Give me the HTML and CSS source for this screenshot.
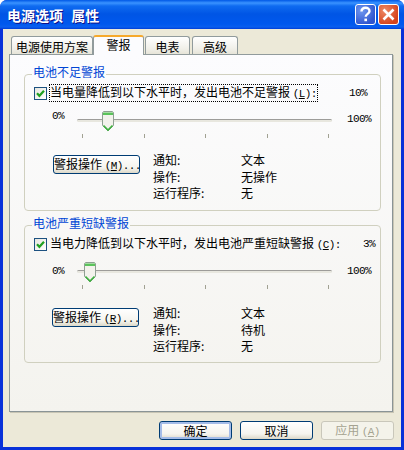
FILE: index.html
```html
<!DOCTYPE html>
<html lang="zh-CN">
<head>
<meta charset="utf-8">
<title>电源选项 属性</title>
<link rel="stylesheet" href="styles.css">
</head>
<body>
<div class="window">
  <header class="titlebar">
    <span class="title">电源选项  属性</span>
    <div class="caption-btns">
      <div class="cap help">
        <svg width="21" height="21" viewBox="0 0 21 21"><path d="M6.5 7.5C6.5 5 8.3 3.8 10.5 3.8S14.5 5 14.5 7.2C14.5 9.8 10.7 10 10.7 12.8" fill="none" stroke="#fff" stroke-width="2.4"/><rect x="9.4" y="14.6" width="2.6" height="2.6" fill="#fff"/></svg>
      </div>
      <div class="cap close">
        <svg width="21" height="21" viewBox="0 0 21 21"><path d="M5.5 5.5L15.5 15.5M15.5 5.5L5.5 15.5" fill="none" stroke="#fff" stroke-width="2.6"/></svg>
      </div>
    </div>
  </header>
  <div class="client">
    <nav class="tabs">
      <div class="tab t1">电源使用方案</div>
      <div class="tab t2 active">警报</div>
      <div class="tab t3">电表</div>
      <div class="tab t4">高级</div>
    </nav>
    <main class="panel">
      <fieldset class="group g1">
        <legend>电池不足警报</legend>
        <div class="check-row">
          <span class="checkbox"><svg width="11" height="11" viewBox="0 0 11 11"><path d="M2 5.2L4.4 7.8L9 2.8" fill="none" stroke="#21a121" stroke-width="2.2"/></svg></span>
          <span class="check-label focus">当电量降低到以下水平时，发出电池不足警报 <span class="lat">(<u>L</u>):</span></span>
          <span class="pct cur">10%</span>
        </div>
        <div class="slider-row">
          <span class="pct lo">0%</span>
          <div class="slider">
            <div class="track"></div>
            <svg class="thumb th1" width="12" height="21" viewBox="0 0 12 21"><path d="M1.5.5H10.5L11.5 1.5V14.5L6 20L.5 14.5V1.5Z" fill="#f3f2ec" stroke="#8f9f92"/><path d="M1 1.5H11V4H1Z" fill="#5bc35b"/><path d="M1.5 14.5L6 19L10.5 14.5" fill="none" stroke="#3fb23f" stroke-width="1.6"/></svg>
            <div class="ticks"><i></i><i></i><i></i><i></i><i></i></div>
          </div>
          <span class="pct hi">100%</span>
        </div>
        <div class="action-row">
          <button class="xp-btn action">警报操作 <span class="lat">(<u>M</u>)...</span></button>
          <dl class="info">
            <dt>通知:</dt><dd>文本</dd>
            <dt>操作:</dt><dd>无操作</dd>
            <dt>运行程序:</dt><dd>无</dd>
          </dl>
        </div>
      </fieldset>
      <fieldset class="group g2">
        <legend>电池严重短缺警报</legend>
        <div class="check-row">
          <span class="checkbox"><svg width="11" height="11" viewBox="0 0 11 11"><path d="M2 5.2L4.4 7.8L9 2.8" fill="none" stroke="#21a121" stroke-width="2.2"/></svg></span>
          <span class="check-label">当电力降低到以下水平时，发出电池严重短缺警报 <span class="lat">(<u>C</u>):</span></span>
          <span class="pct cur">3%</span>
        </div>
        <div class="slider-row">
          <span class="pct lo">0%</span>
          <div class="slider">
            <div class="track"></div>
            <svg class="thumb th2" width="12" height="21" viewBox="0 0 12 21"><path d="M1.5.5H10.5L11.5 1.5V14.5L6 20L.5 14.5V1.5Z" fill="#f3f2ec" stroke="#8f9f92"/><path d="M1 1.5H11V4H1Z" fill="#5bc35b"/><path d="M1.5 14.5L6 19L10.5 14.5" fill="none" stroke="#3fb23f" stroke-width="1.6"/></svg>
            <div class="ticks"><i></i><i></i><i></i><i></i><i></i></div>
          </div>
          <span class="pct hi">100%</span>
        </div>
        <div class="action-row">
          <button class="xp-btn action">警报操作 <span class="lat">(<u>R</u>)...</span></button>
          <dl class="info">
            <dt>通知:</dt><dd>文本</dd>
            <dt>操作:</dt><dd>待机</dd>
            <dt>运行程序:</dt><dd>无</dd>
          </dl>
        </div>
      </fieldset>
    </main>
    <footer class="footer">
      <button class="xp-btn dlg default">确定</button>
      <button class="xp-btn dlg">取消</button>
      <button class="xp-btn dlg disabled">应用 <span class="lat">(<u>A</u>)</span></button>
    </footer>
  </div>
</div>
</body>
</html>
```
FILE: styles.css
```css
* { box-sizing: border-box; }
html, body { margin: 0; padding: 0; }
body { width: 404px; height: 450px; overflow: hidden; background: #fff; }

.window {
  width: 404px; height: 450px;
  display: flex; flex-direction: column;
  font: 12px/16px "Noto Sans CJK SC", sans-serif;
  color: #000;
  background: #0831d9;
  border-radius: 7px 7px 0 0;
  overflow: hidden;
}
.titlebar {
  height: 29px; flex: none;
  display: flex; align-items: center; justify-content: space-between;
  padding: 0 5px 0 7px;
  background: linear-gradient(180deg, #0058e6 0, #3a93ff 3px, #0f6bf0 6px, #0055e5 14px, #0058ee 24px, #0a5fef 27px, #003dd7 29px);
}
.title {
  font-weight: 700; font-size: 14px; line-height: 18px;
  color: #fff; white-space: pre; word-spacing: 1px;
  text-shadow: 1px 1px 0 #0f1089;
}
.caption-btns { display: flex; gap: 2px; }
.cap {
  width: 21px; height: 21px;
  border: 1px solid #fff; border-radius: 3px;
  display: flex;
}
.cap svg { margin: -1px; flex: none; }
.help { background: radial-gradient(circle at 30% 30%, #6f97ef, #2f55cf 75%); }
.close { background: radial-gradient(circle at 30% 30%, #ee8a66, #d5431c 75%); }

.client {
  flex: 1; min-height: 0;
  margin: 0 3px 3px;
  background: #ece9d8;
  padding: 7px 7px 0 6px;
  display: flex; flex-direction: column;
}
.tabs { display: flex; height: 18px; flex: none; align-items: flex-end; padding-left: 2px; position: relative; z-index: 1; }
.tab {
  height: 18px; margin-right: 1px;
  border: 1px solid #919b9c; border-bottom: 0;
  border-radius: 3px 3px 0 0;
  background: linear-gradient(180deg, #fff, #f0efe8 70%, #e6e4d8);
  text-align: center; line-height: 19px;
}
.t1 { width: 82px; margin-right: 0; }
.t2 { width: 51px; }
.t3 { width: 45px; margin-right: 2px; }
.t4 { width: 46px; }
.tab.active {
  height: 20px; margin-bottom: -1px;
  background: #fcfcfe;
  border-top: 2px solid #f6a92c;
  line-height: 15px;
}
.panel {
  height: 358px; flex: none;
  margin-right: 1px;
  border: 1px solid #919b9c;
  border-right-color: #8a9496; border-bottom-color: #8a9496;
  box-shadow: 1px 1px 0 #c8c5b4;
  background: linear-gradient(180deg, #fcfcfe 0, #f4f3ee 100%);
  padding: 9px 12px 0 14px;
}
.group {
  margin: 0; padding: 0 0 0 9px;
  width: 357px;
  border: 1px solid #d0d0bf;
  border-radius: 4px;
  min-inline-size: 0;
}
.g1 { height: 147px; }
.g2 { height: 148px; margin-top: 4px; }
.group legend { color: #0046d5; padding: 0 1px 4px; margin-left: -2px; line-height: 16px; }

.check-row { display: flex; align-items: center; height: 16px; margin-top: 1px; }
.checkbox {
  width: 13px; height: 13px; flex: none;
  border: 1px solid #1c5180;
  background: linear-gradient(135deg, #e6e6df, #fff);
  display: flex; align-items: center; justify-content: center;
  margin-right: 2px;
}
.check-label { white-space: nowrap; padding: 0 1px; }
.focus { outline: 1px dotted #000; outline-offset: -1px; }
.cur { margin-left: auto; margin-right: 13px; }
.g2 .cur { margin-right: 5px; }

.lat, .pct { font: 11px/16px "Liberation Mono", monospace; letter-spacing: -.6px; }

.slider-row { display: flex; height: 30px; margin-top: 10px; padding-left: 18px; }
.lo { width: 25px; flex: none; margin-top: -3px; }
.g2 .lo { margin-top: 1px; }
.hi { margin-left: 15px; }
.g2 .hi { margin-top: 1px; }
.slider { position: relative; width: 255px; height: 30px; flex: none; }
.track {
  position: absolute; left: 0; right: 0; top: 8px; height: 3px;
  background: #e8e7df; border-top: 1px solid #9d9c99; border-radius: 2px;
}
.ticks {
  position: absolute; left: 5px; right: 3px; top: 23px;
  display: flex; justify-content: space-between;
}
.ticks i { width: 1px; height: 4px; background: #a1a192; }
.thumb { position: absolute; top: 0; }
.th1 { left: 25px; }
.th2 { left: 7px; }

.action-row { display: flex; margin-top: 11px; padding-left: 19px; }
.g2 .action-row { margin-top: 13px; padding-left: 18px; }
.xp-btn {
  font: inherit; color: #000;
  height: 19px; padding: 0;
  border: 1px solid #003c74; border-radius: 3px;
  background: linear-gradient(180deg, #fff 0, #f5f4ee 70%, #dcd8c8 100%);
  white-space: nowrap;
}
.action { width: 87px; flex: none; line-height: 15px; margin-top: 3px; }
.info {
  margin: 0 0 0 13px;
  display: grid; grid-template-columns: 88px auto;
  grid-auto-rows: 16.5px; line-height: 16px;
}
.g2 .info { margin-left: 14px; }
.info dt, .info dd { margin: 0; }

.footer { display: flex; justify-content: flex-end; gap: 8px; padding: 9px 0 0; }
.dlg { width: 73px; }
.default { box-shadow: inset 0 0 0 2px #a4bce8; border-color: #003c74; }
.disabled { color: #a5a391; border-color: #c9c7ba; background: #f4f3ea; }
```
